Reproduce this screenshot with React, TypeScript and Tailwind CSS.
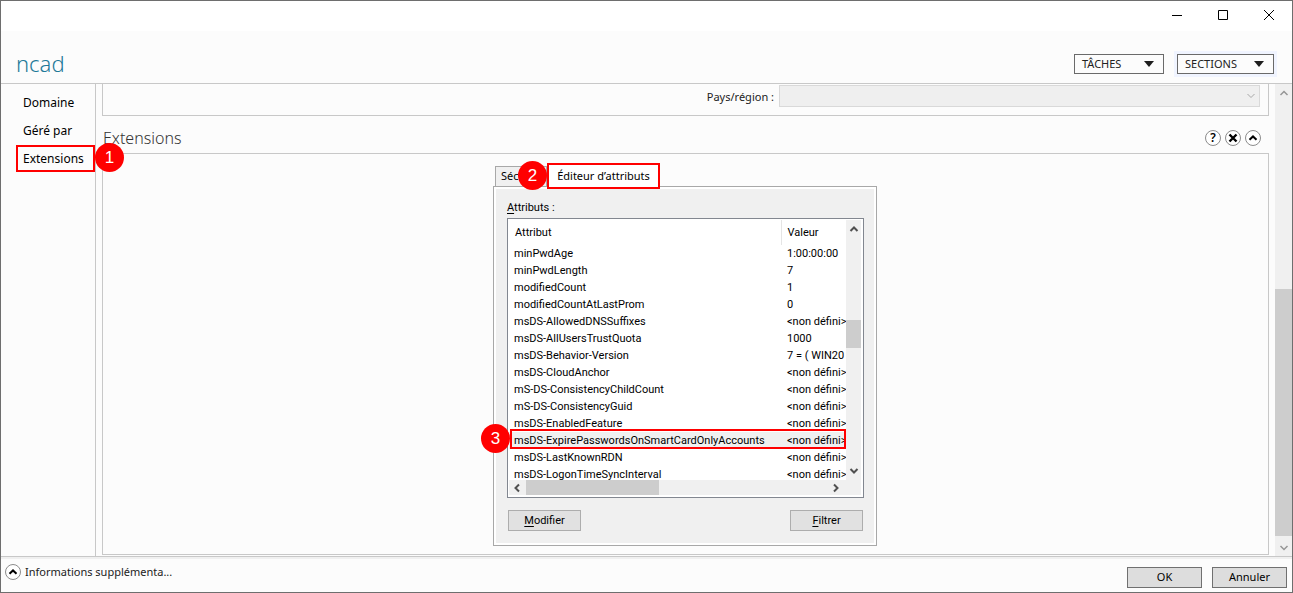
import type { ReactNode } from "react";

const attributes: [string, string][] = [
  ["minPwdAge", "1:00:00:00"],
  ["minPwdLength", "7"],
  ["modifiedCount", "1"],
  ["modifiedCountAtLastProm", "0"],
  ["msDS-AllowedDNSSuffixes", "<non défini>"],
  ["msDS-AllUsersTrustQuota", "1000"],
  ["msDS-Behavior-Version", "7 = ( WIN20"],
  ["msDS-CloudAnchor", "<non défini>"],
  ["mS-DS-ConsistencyChildCount", "<non défini>"],
  ["mS-DS-ConsistencyGuid", "<non défini>"],
  ["msDS-EnabledFeature", "<non défini>"],
  ["msDS-ExpirePasswordsOnSmartCardOnlyAccounts", "<non défini>"],
  ["msDS-LastKnownRDN", "<non défini>"],
  ["msDS-LogonTimeSyncInterval", "<non défini>"],
];

const SELECTED = "msDS-ExpirePasswordsOnSmartCardOnlyAccounts";

function Step({ n, className }: { n: number; className: string }) {
  return (
    <span
      className={`absolute z-10 flex size-[29px] items-center justify-center rounded-full bg-[#ff0000] font-['Liberation_Sans',sans-serif] text-[17px] leading-none text-white ${className}`}
    >
      {n}
    </span>
  );
}

type Direction = "up" | "down" | "left" | "right";

const chevrons: Record<Direction, string> = {
  up: "M1.5 7 L5 3.5 L8.5 7",
  down: "M1.5 3 L5 6.5 L8.5 3",
  left: "M7 1.5 L3.5 5 L7 8.5",
  right: "M3 1.5 L6.5 5 L3 8.5",
};

function Chevron({ dir, className }: { dir: Direction; className: string }) {
  return (
    <svg viewBox="0 0 10 10" className={`size-[10px] shrink-0 ${className}`} fill="none" stroke="currentColor">
      <path d={chevrons[dir]} />
    </svg>
  );
}

function RoundButton({ label, children }: { label: string; children: ReactNode }) {
  return (
    <button
      type="button"
      aria-label={label}
      className="flex size-4 shrink-0 items-center justify-center rounded-full border border-[#8c8c8c] bg-white"
    >
      {children}
    </button>
  );
}

function UpGlyph() {
  return (
    <svg viewBox="0 0 10 10" className="size-[10px]" fill="none" stroke="#000" strokeWidth="2">
      <path d="M1.5 6.7 L5 3.4 L8.5 6.7" />
    </svg>
  );
}

function MenuButton({ children, focused = false }: { children: ReactNode; focused?: boolean }) {
  return (
    <button
      type="button"
      className={`flex h-5 items-center justify-between border border-[#6a6a6a] bg-[#fcfcfc] pr-[9px] pl-[7px] text-[11px] text-[#222] ${
        focused ? "w-[97px] ring-3 ring-[#f0f4ff]" : "w-[90px]"
      }`}
    >
      <span className="pt-px">{children}</span>
      <svg viewBox="0 0 10 6" className="h-[6px] w-[10px]" fill="#1e1e1e">
        <path d="M0 0 H10 L5 6 Z" />
      </svg>
    </button>
  );
}

function PanelButton({ children }: { children: ReactNode }) {
  return (
    <button type="button" className="h-[21px] w-[73px] border border-[#adadad] bg-[#e1e1e1] text-[11px] leading-none">
      {children}
    </button>
  );
}

function AttributeList() {
  return (
    <div className="flex h-[280px] flex-col border border-[#828790] bg-white p-px pr-[2px] pb-[2px]">
      <div className="flex min-h-0 flex-1">
        <div className="min-w-0 flex-1 overflow-hidden">
          <table className="w-full table-fixed border-collapse text-left text-[11px] leading-[17px] whitespace-nowrap">
            <thead>
              <tr className="h-[25px]">
                <th scope="col" className="border-r border-[#e5e5e5] p-0 pl-[6px] font-normal">
                  Attribut
                </th>
                <th scope="col" className="w-[65px] p-0 pl-[6px] font-normal">
                  Valeur
                </th>
              </tr>
            </thead>
            <tbody>
              {attributes.map(([name, value]) => (
                <tr
                  key={name}
                  className={
                    name === SELECTED ? "relative h-[17px] bg-[#f0f0f0]" : "h-[17px]"
                  }
                >
                  <td className="p-0 pl-[5px]">
                    {name}
                    {name === SELECTED && (
                      <span className="pointer-events-none absolute -top-[3px] right-0 bottom-0 left-px border-2 border-[#ff0000]" />
                    )}
                  </td>
                  <td className="p-0 pl-[6px]">{value}</td>
                </tr>
              ))}
            </tbody>
          </table>
        </div>
        <div className="flex w-[15px] flex-col items-center bg-[#f0f0f0] pt-[4px] pb-1">
          <Chevron dir="up" className="stroke-2 text-[#505050]" />
          <div className="mt-[86px] h-7 w-full bg-[#cdcdcd]" />
          <Chevron dir="down" className="mt-auto stroke-2 text-[#505050]" />
        </div>
      </div>
      <div className="flex h-[15px] items-center bg-[#f0f0f0] pr-5 pl-[3px]">
        <Chevron dir="left" className="stroke-2 text-[#505050]" />
        <div className="ml-1 h-full w-[133px] bg-[#cdcdcd]" />
        <Chevron dir="right" className="ml-auto stroke-2 text-[#505050]" />
      </div>
    </div>
  );
}

function AttributeEditor() {
  return (
    <div className="mx-auto mt-[9px] w-[384px]">
      <div role="tablist" className="relative flex h-[23px] items-end pl-[2px] text-[11px]">
        <button
          type="button"
          role="tab"
          aria-selected="false"
          aria-label="Sécurité"
          className="h-5 w-[52px] border border-b-0 border-[#a8a8a8] bg-[#f0f0f0] pl-[5px] text-left"
        >
          Séc
        </button>
        <button
          type="button"
          role="tab"
          aria-selected="true"
          className="relative z-10 -mb-[3px] h-[26px] w-[113px] border-2 border-[#ff0000] bg-white"
        >
          Éditeur d’attributs
        </button>
        <Step n={2} className="-top-[2px] left-[25px]" />
      </div>
      <div className="border border-[#a8a8a8] bg-white p-[2px]">
        <div className="bg-[#f0f0f0] pt-[9px] pr-[10px] pb-3 pl-[11px] font-['Roboto','Liberation_Sans',sans-serif] text-[11px]">
          <div className="flex h-[20px] items-center">
            <span>
              <u className="underline-offset-2">A</u>ttributs :
            </span>
          </div>
          <div className="relative">
            <AttributeList />
            <Step n={3} className="top-[206px] -left-[26px]" />
          </div>
          <div className="mt-3 flex justify-between px-px">
            <PanelButton>
              <u className="underline-offset-2">M</u>odifier
            </PanelButton>
            <PanelButton>
              <u className="underline-offset-2">F</u>iltrer
            </PanelButton>
          </div>
        </div>
      </div>
    </div>
  );
}

export default function App() {
  return (
    <div className="flex h-screen flex-col border border-[#6e6e6e] bg-[#fcfcfc] font-['Noto_Sans','Open_Sans',sans-serif] text-xs text-black">
      <div className="flex h-[30px] shrink-0 items-center justify-end gap-9 bg-white pr-[18px] pb-[2px]">
        <button type="button" aria-label="Réduire" className="size-[10px]">
          <svg viewBox="0 0 10 10" className="size-[10px]" stroke="#000">
            <path d="M0 5.5 H10" />
          </svg>
        </button>
        <button type="button" aria-label="Agrandir" className="size-[10px]">
          <svg viewBox="0 0 10 10" className="size-[10px]" fill="none" stroke="#000">
            <path d="M0.5 0.5 H9.5 V9.5 H0.5 Z" />
          </svg>
        </button>
        <button type="button" aria-label="Fermer" className="size-[10px]">
          <svg viewBox="0 0 10 10" className="size-[10px]" stroke="#000">
            <path d="M0 0 L10 10 M10 0 L0 10" />
          </svg>
        </button>
      </div>

      <header className="flex h-[53px] shrink-0 items-center justify-between border-b border-[#c8c8c8] pt-[13px] pr-[18px] pl-[15px]">
        <h1 className="pb-[2px] text-[22px] leading-none font-light text-[#1f7a99]">ncad</h1>
        <div className="flex gap-[13px]">
          <MenuButton>TÂCHES</MenuButton>
          <MenuButton focused>SECTIONS</MenuButton>
        </div>
      </header>

      <div className="flex min-h-0 flex-1">
        <nav className="relative flex w-[95px] shrink-0 flex-col border-r border-[#c8c8c8] pt-[5px] pl-[15px]">
          <a href="#domaine" className="flex h-7 items-center pl-[7px]">
            Domaine
          </a>
          <a href="#gere" className="flex h-7 items-center pl-[7px]">
            Géré par
          </a>
          <a href="#extensions" className="flex h-[27px] items-center border-2 border-[#ff0000] pl-[5px]">
            Extensions
          </a>
          <Step n={1} className="top-[59px] left-[94px]" />
        </nav>

        <main className="flex min-w-0 flex-1 flex-col overflow-hidden pr-[6px] pb-px pl-[6px]">
          <div className="flex h-8 shrink-0 items-start justify-end gap-[5px] border border-t-0 border-[#c8c8c8] pt-px pr-2">
            <label htmlFor="country" className="flex h-6 items-center text-[11px] text-[#222]">
              Pays/région :
            </label>
            <div className="relative w-[481px]">
              <select id="country" disabled className="block h-[22px] w-full appearance-none border border-[#d9d9d9] bg-[#efefef]" />
              <Chevron dir="down" className="pointer-events-none absolute top-[6px] right-1 text-[#a8a8a8]" />
            </div>
          </div>
          <div className="flex h-[37px] shrink-0 items-center justify-between pt-[7px] pr-2 pl-px">
            <h2 className="text-base leading-none font-light text-[#333]">Extensions</h2>
            <div className="flex gap-1">
              <RoundButton label="Aide">
                <span className="text-xs leading-none font-semibold">?</span>
              </RoundButton>
              <RoundButton label="Supprimer">
                <svg viewBox="0 0 10 10" className="size-[10px]" stroke="#000" strokeWidth="2.4">
                  <path d="M1.5 1.5 L8.5 8.5 M8.5 1.5 L1.5 8.5" />
                </svg>
              </RoundButton>
              <RoundButton label="Replier">
                <UpGlyph />
              </RoundButton>
            </div>
          </div>
          <section className="flex-1 border border-[#c8c8c8] pr-px">
            <AttributeEditor />
          </section>
        </main>

        <div className="flex w-[17px] shrink-0 flex-col items-center bg-[#f0f0f0] pt-[4px] pb-[3px]">
          <Chevron dir="up" className="stroke-[1.5] text-[#969696]" />
          <div className="mt-auto h-[247px] w-full bg-[#cdcdcd]" />
          <Chevron dir="down" className="mt-[7px] stroke-[1.5] text-[#969696]" />
        </div>
      </div>

      <footer className="flex h-9 shrink-0 justify-between border-t border-[#c8c8c8] pr-[5px] pl-1 shadow-[inset_0_2px_0_#f0f0f0]">
        <div className="flex h-[30px] items-center gap-1 text-[11px] text-[#222]">
          <RoundButton label="Développer">
            <UpGlyph />
          </RoundButton>
          Informations supplémenta...
        </div>
        <div className="flex gap-[10px] pt-[10px] text-[11px]">
          <button type="button" className="h-[21px] w-[75px] border border-[#707070] bg-[#dddddd]">
            OK
          </button>
          <button type="button" className="h-[21px] w-[75px] border border-[#707070] bg-[#dddddd]">
            Annuler
          </button>
        </div>
      </footer>
    </div>
  );
}
